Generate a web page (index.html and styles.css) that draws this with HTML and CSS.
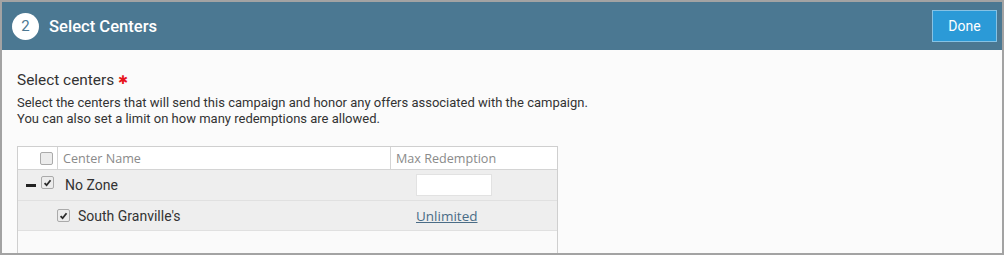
FILE: index.html
```html
<!DOCTYPE html>
<html>
<head>
<meta charset="utf-8">
<link rel="stylesheet" href="styles.css">
</head>
<body>
<div class="frame">
  <div class="header">
    <span class="step">2</span>
    <span class="title">Select Centers</span>
    <button class="done">Done</button>
  </div>
  <div class="content">
    <div class="label">Select centers <span class="req">&#x2731;</span></div>
    <p class="desc">Select the centers that will send this campaign and honor any offers associated with the campaign.<br>You can also set a limit on how many redemptions are allowed.</p>
    <div class="table">
      <div class="row head">
        <div class="c-check"><span class="cb"></span></div>
        <div class="c-name">Center Name</div>
        <div class="c-max">Max Redemption</div>
      </div>
      <div class="row zone">
        <div class="c-check"><span class="minus"></span><span class="cb checked up"><svg viewBox="0 0 12 12" width="12" height="12"><path d="M2.8 6.2 L5 8.4 L9.3 3" fill="none" stroke="#2b2b2b" stroke-width="2"/></svg></span></div>
        <div class="c-name zone-name">No Zone</div>
        <div class="c-max"><span class="input"></span></div>
      </div>
      <div class="row center">
        <div class="c-sub"><span class="cb checked"><svg viewBox="0 0 12 12" width="12" height="12"><path d="M2.8 6.2 L5 8.4 L9.3 3" fill="none" stroke="#2b2b2b" stroke-width="2"/></svg></span><span class="center-name">South Granville's</span></div>
        <div class="c-max"><a class="link" href="#">Unlimited</a></div>
      </div>
      <div class="empty"></div>
    </div>
  </div>
</div>
</body>
</html>
```

FILE: styles.css
```css
* { box-sizing: border-box; }
html, body { margin: 0; padding: 0; }
body { font-family: Roboto, "Liberation Sans", sans-serif; background: #fff; }
.frame {
  width: 1004px;
  height: 255px;
  border: 2px solid #a3a3a3;
  background: #fbfbfb;
  overflow: hidden;
}
.header {
  height: 48px;
  background: #4b7892;
  display: flex;
  align-items: center;
  padding: 0 5px 0 10px;
}
.step {
  width: 27px;
  height: 27px;
  border-radius: 50%;
  background: #fff;
  color: #4b7892;
  font-size: 15px;
  display: flex;
  align-items: center;
  justify-content: center;
}
.title {
  color: #fff;
  font-size: 16.6px;
  margin-left: 10px;
  font-weight: 500;
}
.done {
  margin-left: auto;
  width: 65px;
  height: 32px;
  background: #2b9ad7;
  border: 1px solid #86c2e4;
  color: #fff;
  font-family: Roboto, "Liberation Sans", sans-serif;
  font-size: 14px;
  padding: 0;
}
.content { padding: 20px 15px 0 15px; }
.label { font-size: 15.4px; color: #333; line-height: 20px; }
.req { color: #e8141c; font-size: 12px; vertical-align: 1px; }
.desc { margin: 5px 0 0; font-size: 13px; color: #333; line-height: 16px; }
.table {
  margin-top: 19px;
  width: 541px;
  border: 1px solid #cfcfcf;
  border-bottom: none;
  background: #fafafa;
}
.row { display: flex; }
.head { height: 23px; background: #fff; border-bottom: 1px solid #d4d4d4; }
.head .c-name, .head .c-max {
  font-family: "Open Sans", sans-serif;
  font-size: 12.6px;
  color: #8a8a8a;
  display: flex;
  align-items: center;
}
.c-check {
  width: 40px;
  display: flex;
  align-items: center;
  justify-content: flex-end;
  padding-right: 4px;
}
.head .c-check { border-right: 1px solid #d4d4d4; }
.c-name { flex: 1; padding-left: 5px; }
.c-max { width: 167px; }
.head .c-max { border-left: 1px solid #d4d4d4; padding-left: 5px; }
.zone .c-max, .center .c-max { display: flex; align-items: center; padding-left: 26px; }
.zone { height: 31px; background: #eeeeee; border-bottom: 1px solid #e0e0e0; }
.center { height: 30px; background: #eeeeee; border-bottom: 1px solid #e0e0e0; }
.cb {
  width: 13px;
  height: 13px;
  border: 1px solid #aaa;
  border-radius: 2px;
  background: #ececec;
  display: inline-flex;
  align-items: center;
  justify-content: center;
}
.cb svg { display: block; }
.up { margin-top: -5px; }
.minus { width: 10px; height: 3px; background: #222; margin-right: 5px; }
.zone-name { font-size: 14px; color: #333; display: flex; align-items: center; padding-left: 7px; }
.input { width: 76px; height: 22px; background: #fff; border: 1px solid #e2e2e2; }
.c-sub { flex: 1; display: flex; align-items: center; padding-left: 39px; }
.center-name { font-size: 14px; color: #333; margin-left: 8px; }
.link { font-family: "Open Sans", sans-serif; font-size: 13.5px; color: #4a6c86; text-decoration: underline; }
.empty { height: 30px; }
```
